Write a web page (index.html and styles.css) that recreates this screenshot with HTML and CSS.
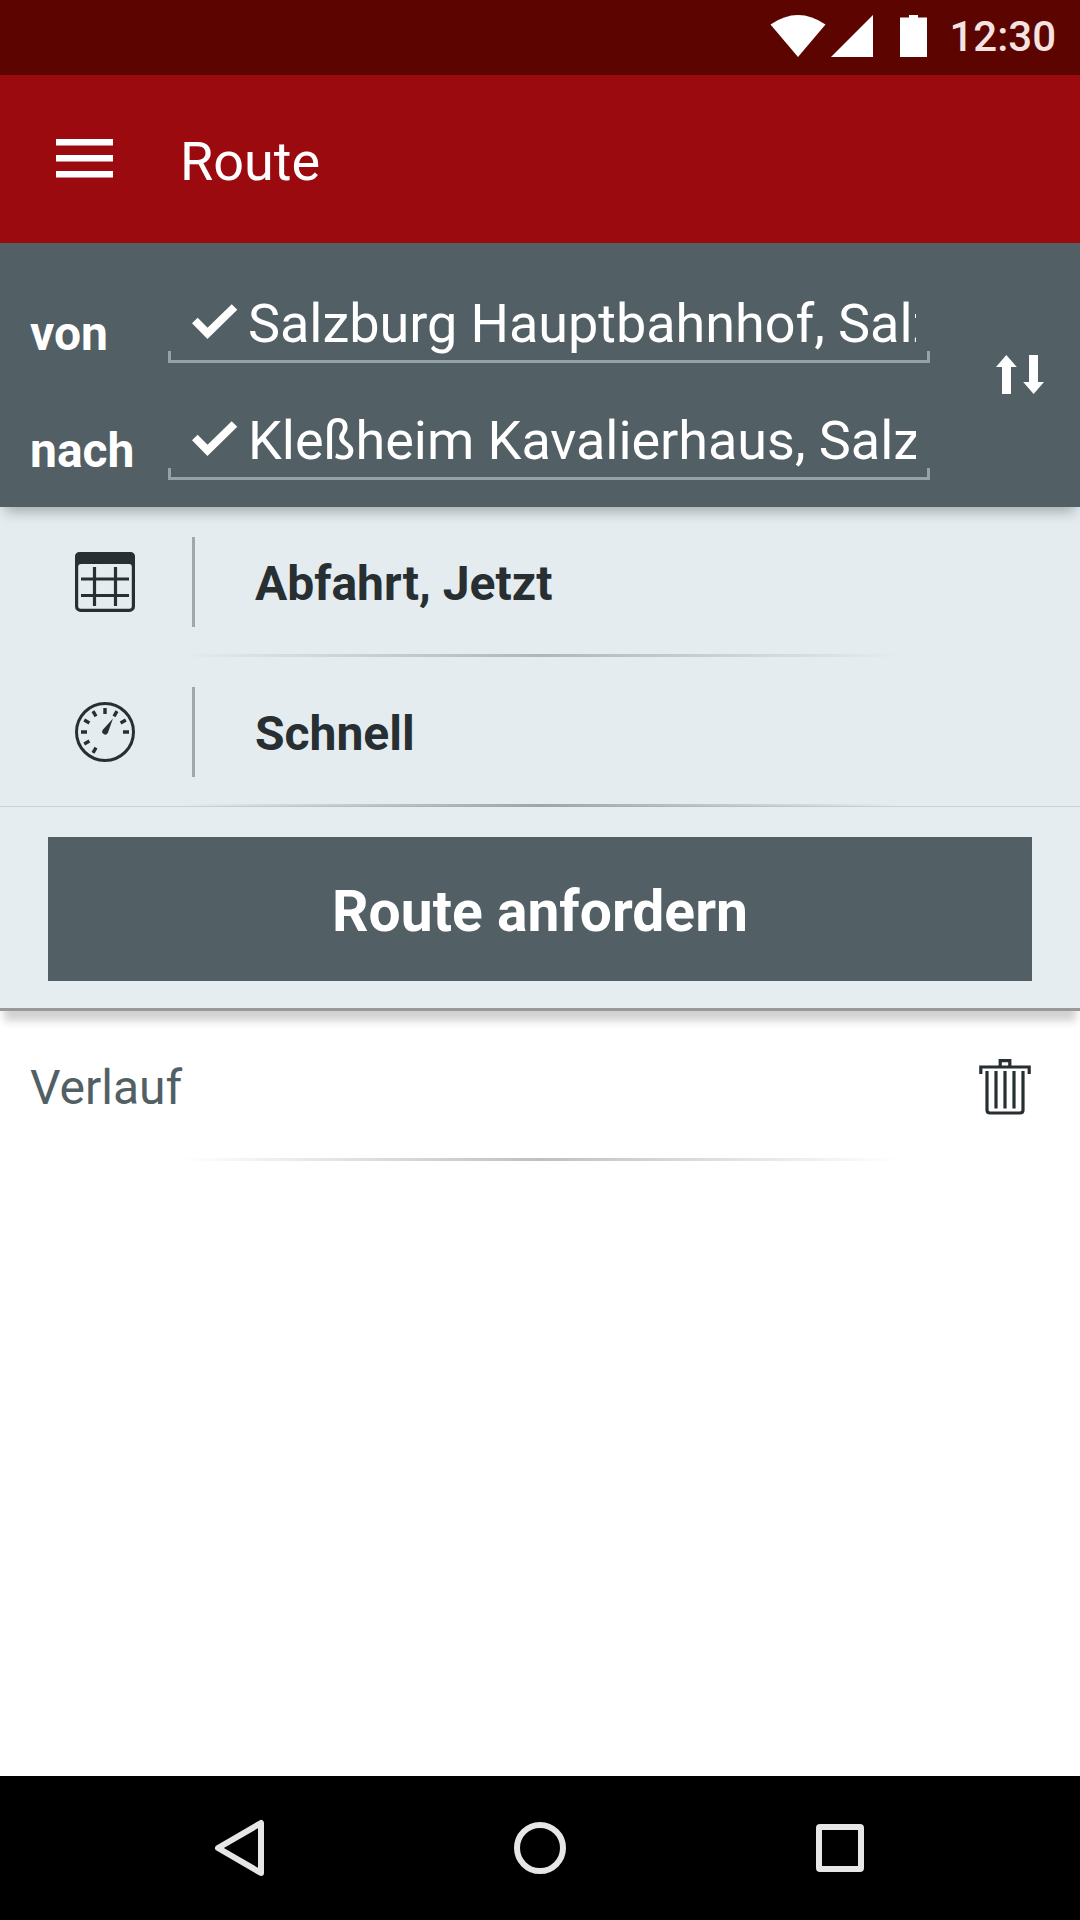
FILE: index.html
```html
<!DOCTYPE html>
<html lang="de">
<head>
    <meta charset="UTF-8">
    <meta name="viewport" content="width=device-width, initial-scale=1.0">
    <title>Route</title>
    <link rel="stylesheet" href="styles.css">
</head>
<body>

    <div class="status-bar">
        <svg class="wifi" width="56" height="42" viewBox="0 0 56 42">
            <path d="M0.5 9.5 Q28 -9.5 55.5 9.5 L28 42 Z" fill="#fff"/>
        </svg>
        <svg class="signal" width="42" height="42" viewBox="0 0 42 42">
            <path d="M42 0 V42 H0 Z" fill="#fff"/>
        </svg>
        <svg class="battery" width="27" height="42" viewBox="0 0 27 42">
            <path d="M9 0 H18 V2.5 H27 V42 H0 V2.5 H9 Z" fill="#fff"/>
        </svg>
        <span class="clock">12:30</span>
    </div>

    <header class="app-bar">
        <svg class="menu-icon" width="57" height="39" viewBox="0 0 57 39">
            <path d="M0 3.3 H57 M0 19.3 H57 M0 35.3 H57" stroke="#fff" stroke-width="6.4"/>
        </svg>
        <h1>Route</h1>
    </header>

    <section class="search-panel">
        <div class="fields">
            <div class="field-row">
                <span class="field-label">von</span>
                <div class="field">
                    <svg class="check" width="46" height="36" viewBox="0 0 46 36">
                        <path d="M2.8 16.5 L15.5 29.3 L42.5 3" fill="none" stroke="#fff" stroke-width="8"/>
                    </svg>
                    <span class="field-value">Salzburg Hauptbahnhof, Salzburg</span>
                </div>
            </div>
            <div class="field-row">
                <span class="field-label">nach</span>
                <div class="field">
                    <svg class="check" width="46" height="36" viewBox="0 0 46 36">
                        <path d="M2.8 16.5 L15.5 29.3 L42.5 3" fill="none" stroke="#fff" stroke-width="8"/>
                    </svg>
                    <span class="field-value">Kleßheim Kavalierhaus, Salzburg</span>
                </div>
            </div>
        </div>
        <svg class="swap" width="48" height="39" viewBox="0 0 48 39">
            <path d="M10.3 0 L20.8 12 H15 V39 H6 V12 H0 Z M33 0 H42 V27 H48 L37.6 39 L27.2 27 H33 Z" fill="#fff"/>
        </svg>
    </section>

    <section class="options">
        <div class="option">
            <svg class="option-icon" width="60" height="60" viewBox="0 0 60 60" fill="none" stroke="#272f32">
                <rect x="1.6" y="1.6" width="56.8" height="56.8" rx="4" stroke-width="3.2"/>
                <path d="M0 15 V5 Q0 0 5 0 H55 Q60 0 60 5 V15 H57 Q57 12 54 12 H6 Q3 12 3 15 Z" fill="#272f32" stroke="none"/>
                <path d="M19.5 15 V54 M40.5 15 V54 M6 27 H54 M6 43.5 H54" stroke-width="3.2"/>
            </svg>
            <span class="option-text">Abfahrt, Jetzt</span>
        </div>
        <div class="option last">
            <svg class="option-icon" width="60" height="60" viewBox="0 0 60 60" fill="none" stroke="#272f32">
                <circle cx="30" cy="30" r="28.5" stroke-width="3"/>
                <path d="M30 6 V12 M18 9.2 L21 14.4 M42 9.2 L39 14.4 M9.2 18 L14.4 21 M50.8 18 L45.6 21 M6 30 H12 M48 30 H54 M9.2 42 L14.4 39 M18 50.8 L21 45.6" stroke-width="3.4"/>
                <path d="M38 16.5 L32.8 31 A3 3 0 1 1 27.6 28 Z" fill="#272f32" stroke="none"/>
            </svg>
            <span class="option-text">Schnell</span>
        </div>
        <div class="submit">
            <button type="button" class="route-btn">Route anfordern</button>
        </div>
    </section>

    <section class="history">
        <h2>Verlauf</h2>
        <svg class="trash" width="52" height="56" viewBox="0 0 52 56" fill="none" stroke="#272f32" stroke-width="3.2">
            <path d="M1.8 15 V8 H50.2 V15"/>
            <path d="M21.2 8 V1.7 H30.8 V8"/>
            <path d="M8 12 V51 Q8 54 11 54 H41 Q44 54 44 51 V12 M17 12 V49.5 M26 12 V49.5 M35 12 V49.5"/>
        </svg>
    </section>

    <nav class="nav-bar">
        <svg width="60" height="60" viewBox="0 0 60 60">
            <path d="M8 30 L51 5 V55 Z"/>
        </svg>
        <svg width="60" height="60" viewBox="0 0 60 60">
            <circle cx="30" cy="30" r="23"/>
        </svg>
        <svg width="60" height="60" viewBox="0 0 60 60">
            <rect x="9" y="9" width="42" height="42" rx="1"/>
        </svg>
    </nav>

</body>
</html>
```

FILE: styles.css
```css
* {
    box-sizing: border-box;
}
body {
    margin: 0;
    width: 1080px;
    height: 1920px;
    display: flex;
    flex-direction: column;
    overflow: hidden;
    background-color: #fff;
    font-family: Roboto, sans-serif;
}
svg {
    display: block;
    flex-shrink: 0;
}
h1, h2 {
    margin: 0;
    font-weight: 400;
}

.status-bar {
    height: 75px;
    padding: 15px 24px 0 0;
    display: flex;
    justify-content: flex-end;
    background-color: #5b0400;
}
.wifi {
    margin-right: 5px;
}
.signal {
    margin-right: 27px;
}
.battery {
    margin-right: 22px;
}
.clock {
    font-size: 42px;
    font-weight: 500;
    line-height: 43px;
    color: #f5e2e2;
}

.app-bar {
    height: 168px;
    padding-left: 56px;
    display: flex;
    align-items: center;
    background-color: #9b0a0f;
}
.menu-icon {
    margin-bottom: 2px;
}
.app-bar h1 {
    margin-left: 67px;
    padding-top: 5px;
    font-size: 54px;
    color: #fff;
}

.search-panel {
    position: relative;
    z-index: 1;
    height: 264px;
    padding: 3px 36px 0 30px;
    display: flex;
    justify-content: space-between;
    background-color: #525f64;
    color: #fff;
    box-shadow: 0 10px 12px -5px rgba(0, 0, 0, 0.27);
}
.field-row {
    height: 117px;
    display: flex;
}
.field-label {
    width: 138px;
    padding-top: 58px;
    font-size: 48px;
    font-weight: 700;
    line-height: 60px;
}
.field {
    width: 762px;
    padding: 45px 14px 0 24px;
    display: flex;
    background:
        linear-gradient(#94a2a9, #94a2a9) left bottom / 3px 12px no-repeat,
        linear-gradient(#94a2a9, #94a2a9) right bottom / 3px 12px no-repeat,
        linear-gradient(#94a2a9, #94a2a9) left bottom / 100% 3px no-repeat;
}
.check {
    margin-top: 13px;
}
.field-value {
    flex: 1;
    margin-left: 10px;
    font-size: 54px;
    line-height: 66px;
    letter-spacing: -0.05px;
    white-space: nowrap;
    overflow: hidden;
}
.swap {
    margin-top: 109px;
}

.options {
    background-color: #e4ecef;
    border-bottom: 3px solid #999;
    box-shadow: 0 14px 8px -4px rgba(0, 0, 0, 0.18);
}
.option {
    height: 150px;
    padding-left: 75px;
    display: flex;
    align-items: center;
    background: linear-gradient(90deg, transparent 180px, #b0b6b9 540px, transparent 900px) bottom / 100% 3px no-repeat;
}
.option.last {
    background:
        linear-gradient(90deg, transparent 180px, #9fa5a8 540px, transparent 900px) bottom / 100% 3px no-repeat,
        linear-gradient(#cbd1d4, #cbd1d4) bottom / 100% 1px no-repeat;
}
.option-text {
    height: 90px;
    margin-left: 57px;
    padding-left: 60px;
    border-left: 3px solid #a0a8ab;
    font-size: 48px;
    font-weight: 700;
    line-height: 94px;
    color: #272f32;
}
.submit {
    height: 201px;
    padding: 30px 48px 27px;
    background-color: #e6edf0;
}
.route-btn {
    display: block;
    width: 100%;
    height: 144px;
    padding: 4px 0 0;
    border: none;
    background-color: #525f64;
    color: #fff;
    font-family: inherit;
    font-size: 57px;
    font-weight: 700;
}

.history {
    height: 150px;
    padding: 0 49px 0 30px;
    display: flex;
    align-items: center;
    justify-content: space-between;
    background: linear-gradient(90deg, transparent 180px, #c0c0c0 540px, transparent 900px) bottom / 100% 3px no-repeat;
}
.history h2 {
    padding-top: 3px;
    font-size: 48px;
    color: #525f64;
}
.trash {
    margin-top: 2px;
}

.nav-bar {
    height: 144px;
    margin-top: auto;
    padding: 0 210px;
    display: flex;
    align-items: center;
    justify-content: space-between;
    background-color: #000;
}
.nav-bar svg {
    fill: none;
    stroke: #e6e6e6;
    stroke-width: 6;
    stroke-linejoin: round;
}
```
